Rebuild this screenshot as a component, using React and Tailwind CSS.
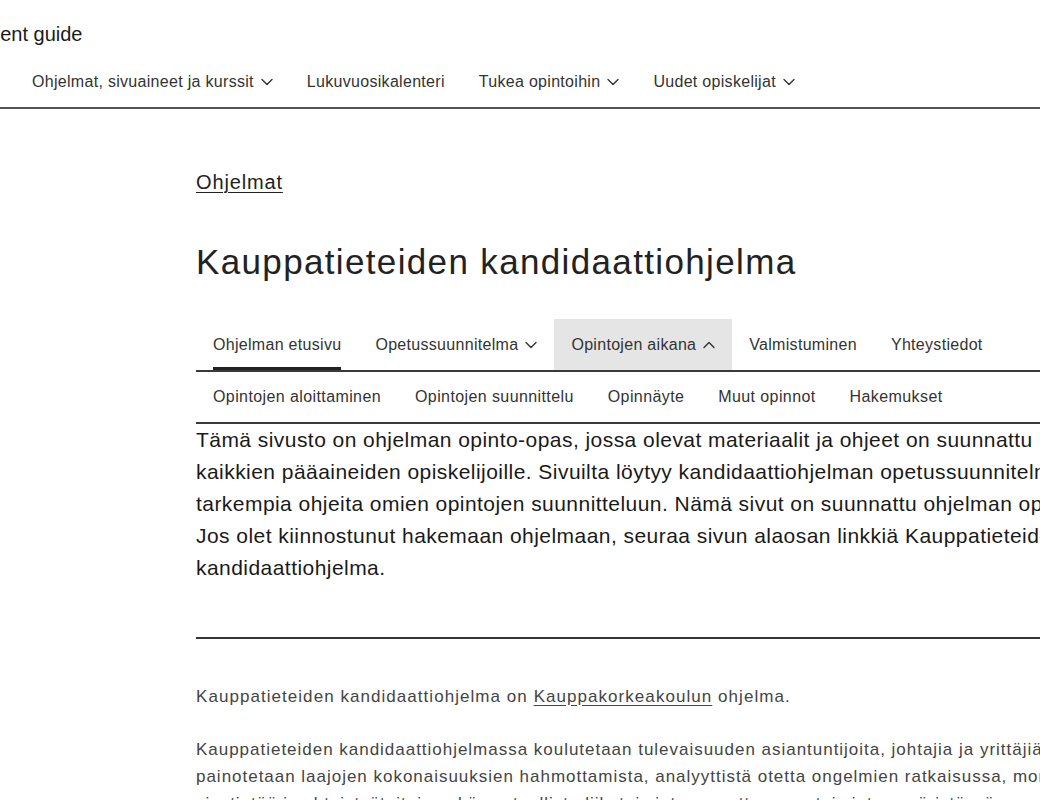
import React from "react";

function Chevron({ up = false }) {
  return (
    <svg
      width="12"
      height="8"
      viewBox="0 0 12 8"
      className="ml-[7px] shrink-0"
      fill="none"
      stroke="#333"
      strokeWidth="1.4"
      strokeLinecap="round"
      strokeLinejoin="round"
    >
      {up ? <polyline points="1,6.5 6,1.5 11,6.5" /> : <polyline points="1,1.5 6,6.5 11,1.5" />}
    </svg>
  );
}

const topNav = [
  { label: "Ohjelmat, sivuaineet ja kurssit", chevron: true },
  { label: "Lukuvuosikalenteri", chevron: false },
  { label: "Tukea opintoihin", chevron: true },
  { label: "Uudet opiskelijat", chevron: true },
];

const tabs = [
  { label: "Ohjelman etusivu", active: true },
  { label: "Opetussuunnitelma", chevron: "down" },
  { label: "Opintojen aikana", chevron: "up", open: true },
  { label: "Valmistuminen" },
  { label: "Yhteystiedot" },
];

const subTabs = [
  "Opintojen aloittaminen",
  "Opintojen suunnittelu",
  "Opinnäyte",
  "Muut opinnot",
  "Hakemukset",
];

const introLines = [
  "Tämä sivusto on ohjelman opinto-opas, jossa olevat materiaalit ja ohjeet on suunnattu",
  "kaikkien pääaineiden opiskelijoille. Sivuilta löytyy kandidaattiohjelman opetussuunnitelma sekä",
  "tarkempia ohjeita omien opintojen suunnitteluun. Nämä sivut on suunnattu ohjelman opiskelijoille.",
  "Jos olet kiinnostunut hakemaan ohjelmaan, seuraa sivun alaosan linkkiä Kauppatieteiden",
  "kandidaattiohjelma.",
];

const bodyLines = [
  "Kauppatieteiden kandidaattiohjelmassa koulutetaan tulevaisuuden asiantuntijoita, johtajia ja yrittäjiä. Ohjelmassa",
  "painotetaan laajojen kokonaisuuksien hahmottamista, analyyttistä otetta ongelmien ratkaisussa, monipuolista",
  "viestintää ja yhteistyötaitoja sekä vastuullista liiketoimintaa muuttuvassa toimintaympäristössä.",
];

export default function App() {
  return (
    <div
      className="w-[1040px] h-[800px] overflow-hidden bg-white text-[#222]"
      style={{ fontFamily: '"Liberation Sans", Arial, sans-serif' }}
    >
      {/* Site title */}
      <div className="pt-[22px] h-[46px]">
        <div className="ml-[-41px] text-[20px] leading-[24px] text-[#1a1a1a] whitespace-nowrap">
          Student guide
        </div>
      </div>

      {/* Top navigation */}
      <nav className="flex pl-[15px] pt-[25px] pb-[14px] border-b-2 border-[#555] w-[1040px]">
        {topNav.map((item) => (
          <div
            key={item.label}
            className="flex items-center px-[17px] text-[16px] leading-[22px] tracking-[0.3px] text-[#333] whitespace-nowrap"
          >
            {item.label}
            {item.chevron && <Chevron />}
          </div>
        ))}
      </nav>

      {/* Main column */}
      <main className="pl-[196px] w-[1400px]">
        <div className="mt-[61px] text-[20px] leading-[24px] tracking-[0.85px]">
          <span className="underline underline-offset-[3px] decoration-1 text-[#222]">Ohjelmat</span>
        </div>

        <h1 className="mt-[46px] text-[35px] leading-[44px] tracking-[1.35px] text-[#222] font-normal whitespace-nowrap">
          Kauppatieteiden kandidaattiohjelma
        </h1>

        {/* Tabs */}
        <div className="mt-[35px] flex h-[53px] border-b-2 border-[#3a3a3a]">
          {tabs.map((t) => (
            <div
              key={t.label}
              className={
                "flex h-[51px] items-center px-[17px] text-[16px] tracking-[0.3px] text-[#333] whitespace-nowrap " +
                (t.open ? "bg-[#e5e5e5]" : "")
              }
            >
              {t.active ? (
                <span className="flex h-full items-center pt-[3px] border-b-[3px] border-[#222]">
                  {t.label}
                </span>
              ) : (
                <>
                  {t.label}
                  {t.chevron === "down" && <Chevron />}
                  {t.chevron === "up" && <Chevron up />}
                </>
              )}
            </div>
          ))}
        </div>

        {/* Sub tabs */}
        <div className="flex h-[52px] border-b-2 border-[#3a3a3a]">
          {subTabs.map((s) => (
            <div
              key={s}
              className="flex h-[50px] items-center px-[17px] text-[16px] tracking-[0.4px] text-[#333] whitespace-nowrap"
            >
              {s}
            </div>
          ))}
        </div>

        {/* Intro */}
        <div className="text-[21px] leading-[32px] tracking-[0.45px] text-[#1a1a1a]">
          {introLines.map((l) => (
            <div key={l} className="whitespace-nowrap">
              {l}
            </div>
          ))}
        </div>

        <div className="mt-[53px] border-t-2 border-[#333]" />

        {/* Body */}
        <div className="mt-[44px] text-[17px] leading-[27px] tracking-[1.05px] text-[#444] whitespace-nowrap">
          Kauppatieteiden kandidaattiohjelma on{" "}
          <span className="underline underline-offset-[3px]">Kauppakorkeakoulun</span> ohjelma.
        </div>

        <div className="mt-[26px] text-[17px] leading-[27px] tracking-[0.98px] text-[#444]">
          {bodyLines.map((l) => (
            <div key={l} className="whitespace-nowrap">
              {l}
            </div>
          ))}
        </div>
      </main>
    </div>
  );
}
